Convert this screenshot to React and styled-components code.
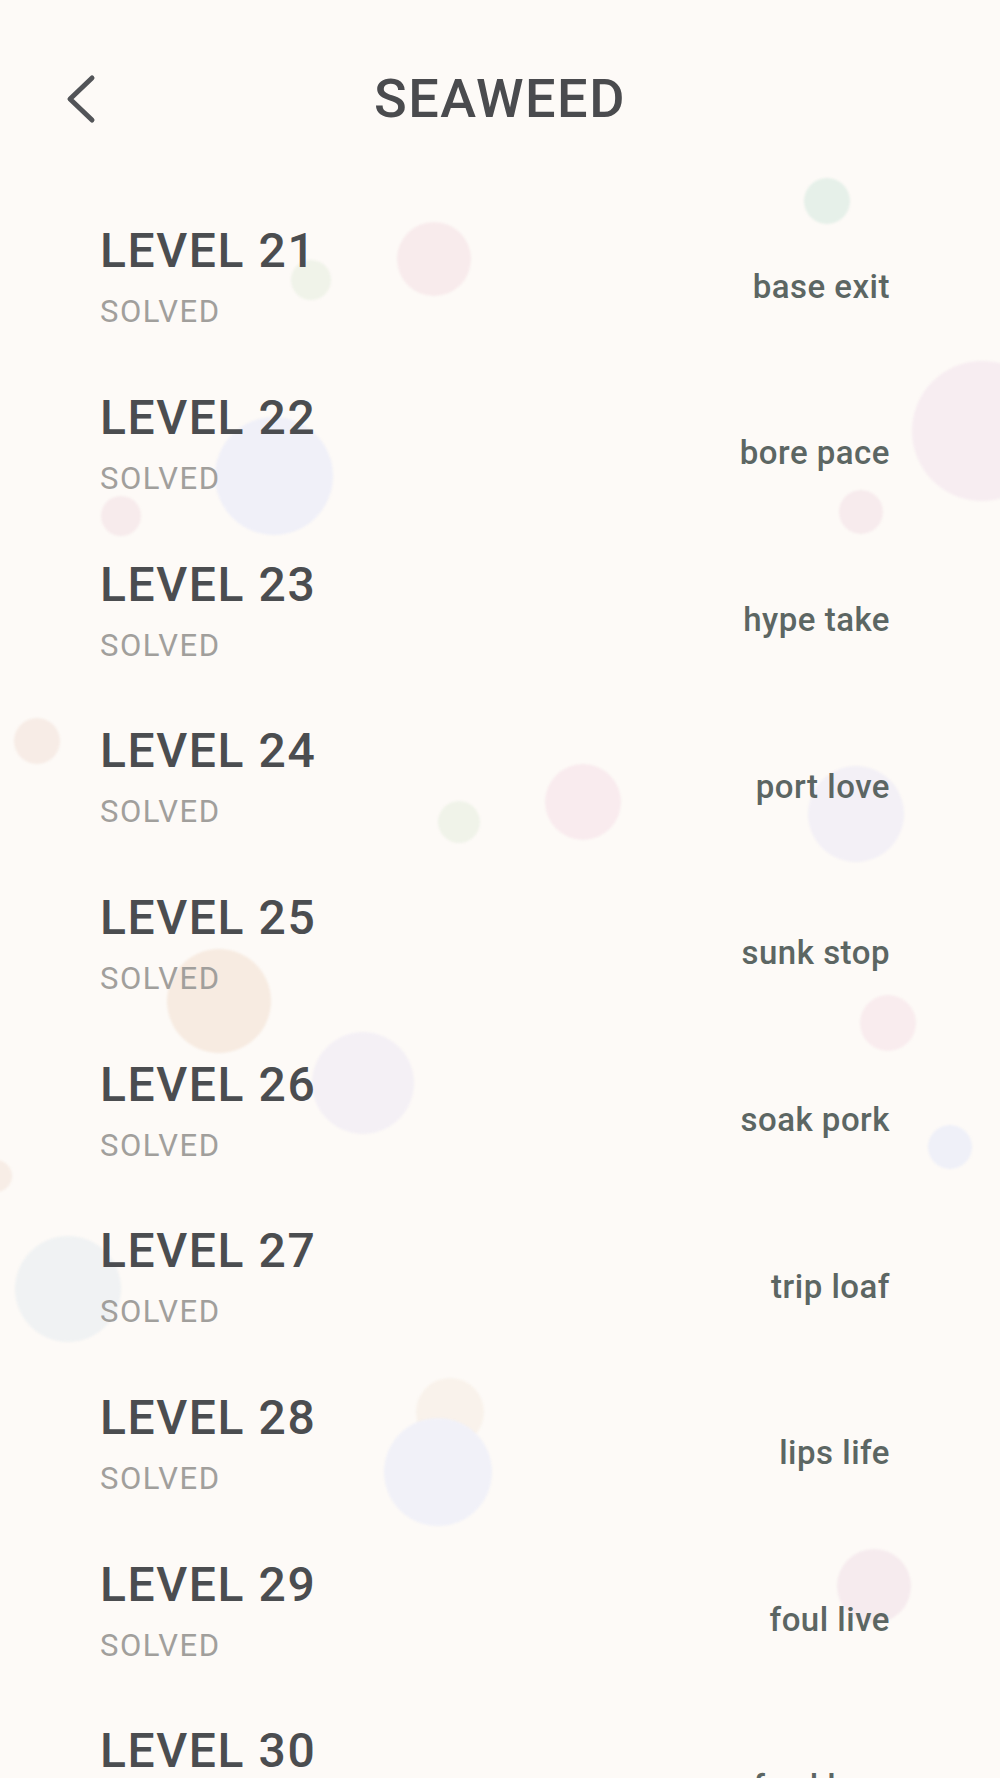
import React from "react";
import styled, { createGlobalStyle } from "styled-components";

const GlobalStyle = createGlobalStyle`
  html, body {
    margin: 0;
    padding: 0;
    background: #fdfaf7;
  }
  body {
    font-family: Roboto, "Noto Sans", "Liberation Sans", sans-serif;
  }
`;

// Whole screen
const Screen = styled.div`
  position: relative;
  width: 1000px;
  height: 1778px;
  overflow: hidden;
  background: #fdfaf7;
`;

// Decorative bubbles behind the list
const BubbleLayer = styled.div`
  position: absolute;
  inset: 0;
  pointer-events: none;
  z-index: 0;
`;

const Bubble = styled.span`
  position: absolute;
  left: ${({ x, r }) => x - r}px;
  top: ${({ y, r }) => y - r}px;
  width: ${({ r }) => r * 2}px;
  height: ${({ r }) => r * 2}px;
  border-radius: 50%;
  background: ${({ color }) => color};
  filter: blur(1px);
`;

const Content = styled.div`
  position: relative;
  z-index: 1;
`;

// Header bar
const Header = styled.header`
  box-sizing: border-box;
  height: 194px;
  padding: 4px 60px 0 65px;
  display: flex;
  align-items: center;
`;

const BackButton = styled.button`
  width: 40px;
  height: 56px;
  padding: 0;
  border: none;
  background: none;
  display: flex;
  align-items: center;
  justify-content: flex-start;
  cursor: pointer;
`;

const Title = styled.h1`
  flex: 1;
  margin: 0;
  text-align: center;
  font-size: 54px;
  line-height: 1;
  font-weight: 500;
  color: #4a4b4e;
  letter-spacing: 1.5px;
`;

const Spacer = styled.div`
  width: 45px;
`;

// Level list
const List = styled.ul`
  list-style: none;
  margin: 0;
  padding: 0;
`;

const Row = styled.li`
  box-sizing: border-box;
  height: 166.67px;
  padding: 0 110px 0 100px;
  display: flex;
  align-items: center;
  justify-content: space-between;
`;

const LevelInfo = styled.div`
  display: flex;
  flex-direction: column;
`;

const LevelName = styled.div`
  font-size: 48px;
  line-height: 1;
  font-weight: 500;
  letter-spacing: 1.6px;
  color: #4b4d50;
`;

const Status = styled.div`
  margin-top: 21px;
  font-size: 31px;
  line-height: 1;
  font-weight: 400;
  letter-spacing: 1.5px;
  color: #a19f9c;
`;

const Answer = styled.div`
  margin-top: 18px;
  font-size: 33px;
  line-height: 1;
  font-weight: 500;
  letter-spacing: 0.5px;
  color: #5c6663;
`;

const bubbles = [
  { x: 827, y: 201, r: 23, color: "#e6f0e9" },
  { x: 434, y: 259, r: 37, color: "#f8ebec" },
  { x: 311, y: 280, r: 20, color: "#f0f3e9" },
  { x: 982, y: 431, r: 70, color: "#f7edf1" },
  { x: 274, y: 476, r: 59, color: "#f0f0f8" },
  { x: 121, y: 516, r: 20, color: "#f7ebec" },
  { x: 861, y: 512, r: 22, color: "#f7ebed" },
  { x: 37, y: 741, r: 23, color: "#f7ece6" },
  { x: 583, y: 802, r: 38, color: "#f9ebee" },
  { x: 459, y: 822, r: 21, color: "#f0f3e9" },
  { x: 856, y: 814, r: 48, color: "#f3f0f6" },
  { x: 219, y: 1001, r: 52, color: "#f7ebe1" },
  { x: 363, y: 1083, r: 51, color: "#f4f0f5" },
  { x: 888, y: 1023, r: 28, color: "#f9ecee" },
  { x: 950, y: 1147, r: 22, color: "#eff0f8" },
  { x: -4, y: 1176, r: 16, color: "#f7ede6" },
  { x: 68, y: 1289, r: 53, color: "#f0f2f3" },
  { x: 450, y: 1412, r: 34, color: "#f9f2eb" },
  { x: 438, y: 1472, r: 54, color: "#f1f1f8" },
  { x: 874, y: 1586, r: 37, color: "#f6ebee" },
];

const levels = [
  { n: 21, answer: "base exit" },
  { n: 22, answer: "bore pace" },
  { n: 23, answer: "hype take" },
  { n: 24, answer: "port love" },
  { n: 25, answer: "sunk stop" },
  { n: 26, answer: "soak pork" },
  { n: 27, answer: "trip loaf" },
  { n: 28, answer: "lips life" },
  { n: 29, answer: "foul live" },
  { n: 30, answer: "fowl love" },
];

const BackIcon = () => (
  <svg width="32" height="50" viewBox="0 0 32 50" fill="none">
    <polyline
      points="27,4 5,25 27,46"
      stroke="#525458"
      strokeWidth="5"
      strokeLinecap="round"
      strokeLinejoin="round"
    />
  </svg>
);

export default function App() {
  return (
    <Screen>
      <GlobalStyle />
      <BubbleLayer>
        {bubbles.map((b, i) => (
          <Bubble key={i} x={b.x} y={b.y} r={b.r} color={b.color} />
        ))}
      </BubbleLayer>
      <Content>
        <Header>
          <BackButton aria-label="Back">
            <BackIcon />
          </BackButton>
          <Title>SEAWEED</Title>
          <Spacer />
        </Header>
        <List>
          {levels.map((lvl) => (
            <Row key={lvl.n}>
              <LevelInfo>
                <LevelName>LEVEL {lvl.n}</LevelName>
                <Status>SOLVED</Status>
              </LevelInfo>
              <Answer>{lvl.answer}</Answer>
            </Row>
          ))}
        </List>
      </Content>
    </Screen>
  );
}
